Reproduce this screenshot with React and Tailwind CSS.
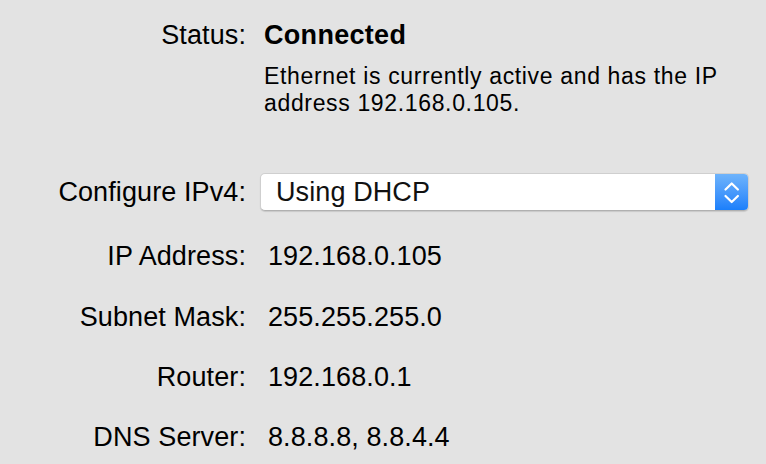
import React from 'react';

const rows = [
    { label: 'IP Address:', value: '192.168.0.105', mt: 'mt-[30px]' },
    { label: 'Subnet Mask:', value: '255.255.255.0', mt: 'mt-[31px]' },
    { label: 'Router:', value: '192.168.0.1', mt: 'mt-[30px]' },
    { label: 'DNS Server:', value: '8.8.8.8, 8.8.4.4', mt: 'mt-[30px]' },
];

const Label = ({ children }) => (
    <div className="w-[246px] shrink-0 text-right text-[27px] leading-[30px] tracking-[0.1px] text-black">
        {children}
    </div>
);

const Chevrons = () => (
    <svg width="33" height="38" viewBox="0 0 33 38" fill="none">
        <path d="M10.5 16.5 L16.7 10.5 L22.9 16.5" stroke="white" strokeWidth="2.2" strokeLinecap="round" strokeLinejoin="round" />
        <path d="M10.5 23 L16.7 29 L22.9 23" stroke="white" strokeWidth="2.2" strokeLinecap="round" strokeLinejoin="round" />
    </svg>
);

export default function App() {
    return (
        <div
            className="w-[766px] h-[464px] overflow-hidden bg-[#e3e3e3] pt-[20px] text-black"
            style={{ fontFamily: '"Liberation Sans", Arial, sans-serif' }}
        >
            {/* status */}
            <div className="flex">
                <Label>Status:</Label>
                <div className="pl-[18px]">
                    <div className="text-[27px] leading-[30px] font-bold tracking-[0.3px]">Connected</div>
                    <div className="mt-[13px] text-[23px] leading-[27px] tracking-[0.65px]">
                        Ethernet is currently active and has the IP
                        <br />
                        address 192.168.0.105.
                    </div>
                </div>
            </div>

            {/* configure */}
            <div className="flex items-center mt-[56px]">
                <Label>Configure IPv4:</Label>
                <div className="ml-[14px] w-[489px] h-[38px] flex rounded-[5px] bg-white border border-[#cfcfcf] border-b-[#b0b0b0] shadow-[0_1px_1px_rgba(0,0,0,0.12)] overflow-hidden">
                    <div className="flex-1 flex items-center pl-[15px] text-[27px] leading-[30px] tracking-[0.1px] text-[#111]">
                        Using DHCP
                    </div>
                    <div className="w-[33px] h-full bg-gradient-to-b from-[#6db3fb] to-[#1a7ffb] flex items-center justify-center">
                        <Chevrons />
                    </div>
                </div>
            </div>

            {/* details */}
            {rows.map((r) => (
                <div key={r.label} className={`flex ${r.mt}`}>
                    <Label>{r.label}</Label>
                    <div className="pl-[22px] text-[27px] leading-[30px] tracking-[0.1px]">{r.value}</div>
                </div>
            ))}
        </div>
    );
}
